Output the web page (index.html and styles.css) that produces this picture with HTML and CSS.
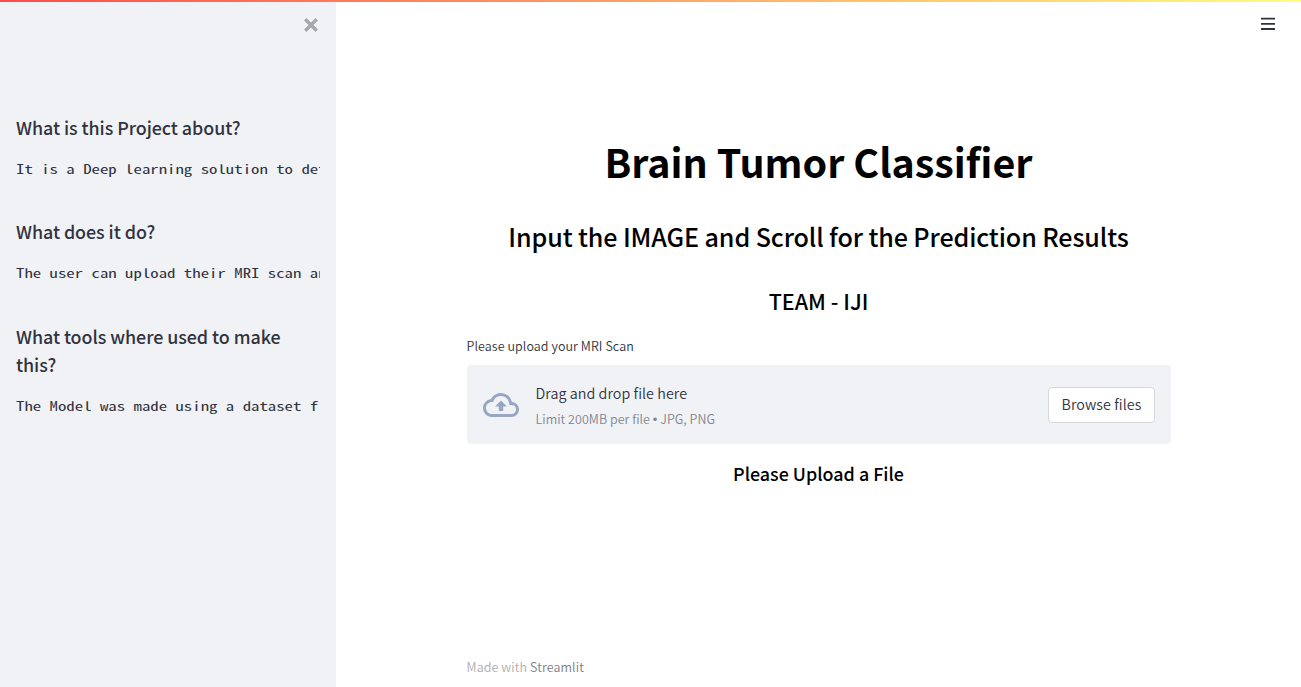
FILE: index.html
```html
<!DOCTYPE html>
<html lang="en">
<head>
<meta charset="utf-8">
<title>Brain Tumor Classifier</title>
<link rel="stylesheet" href="styles.css">
</head>
<body>
<div class="decoration"></div>
<div class="app">
  <aside class="sidebar">
    <button class="close" aria-label="Close">
      <svg width="20" height="20" viewBox="0 0 8 8"><path d="M1.4 0 0 1.4l.7.72L2.58 4 .7 5.88 0 6.57 1.4 8l.72-.72L4 5.4l1.88 1.88.69.72L8 6.57l-.72-.69L5.4 4l1.88-1.88L8 1.4 6.57 0l-.69.7L4 2.58 2.12.7z" transform="translate(1.2 1.2) scale(.7)"/></svg>
    </button>
    <section class="topic">
      <h2 class="topic-title">What is this Project about?</h2>
      <pre class="topic-text"><code>It is a Deep learning solution to det</code></pre>
    </section>
    <section class="topic">
      <h2 class="topic-title">What does it do?</h2>
      <pre class="topic-text"><code>The user can upload their MRI scan an</code></pre>
    </section>
    <section class="topic">
      <h2 class="topic-title">What tools where used to make this?</h2>
      <pre class="topic-text"><code>The Model was made using a dataset f</code></pre>
    </section>
  </aside>
  <main class="main">
    <header class="toolbar">
      <svg width="16" height="16" viewBox="0 0 16 16"><path d="M1 1.7h14v1.8H1zM1 7h14v1.8H1zM1 12.1h14v1.8H1z"/></svg>
    </header>
    <div class="content">
      <h1 class="title"><span>Brain Tumor Classifier</span></h1>
      <h2 class="subtitle"><span>Input the IMAGE and Scroll for the Prediction Results</span></h2>
      <h3 class="team"><span>TEAM - IJI</span></h3>
      <label class="label"><span>Please upload your MRI Scan</span></label>
      <div class="dropzone">
        <svg class="cloud" width="36" height="36" viewBox="0 0 24 24"><path d="M19.35 10.04A7.49 7.49 0 0 0 12 4C9.11 4 6.6 5.64 5.35 8.04A5.994 5.994 0 0 0 0 14c0 3.31 2.69 6 6 6h13c2.76 0 5-2.24 5-5 0-2.64-2.05-4.78-4.65-4.96zM19 18H6c-2.21 0-4-1.79-4-4 0-2.05 1.53-3.76 3.56-3.97l1.07-.11.5-.95A5.469 5.469 0 0 1 12 6c2.62 0 4.88 1.86 5.39 4.43l.3 1.5 1.53.11A2.98 2.98 0 0 1 22 15c0 1.65-1.35 3-3 3zM8 13h2.55v3h2.9v-3H16l-4-4z"/></svg>
        <div class="instructions">
          <span class="drag">Drag and drop file here</span>
          <span class="limit">Limit 200MB per file <span class="bullet">•</span> JPG, PNG</span>
        </div>
        <button class="browse">Browse files</button>
      </div>
      <h4 class="notice"><span>Please Upload a File</span></h4>
    </div>
    <footer class="footer"><span>Made with <a class="brand">Streamlit</a></span></footer>
  </main>
</div>
</body>
</html>
```

FILE: styles.css
```css
* { box-sizing: border-box; margin: 0; padding: 0; }
body {
  font-family: "Noto Sans CJK SC", "Open Sans", sans-serif;
  font-weight: 350;
  color: #31333f;
  background: #fff;
  overflow: hidden;
}
h1, h2, h3, h4 { font-weight: 500; }
button { font: inherit; color: inherit; }
.decoration {
  position: absolute;
  top: 0; left: 0; right: 0;
  height: 2px;
  background: linear-gradient(90deg, #ff4b4b, #fffd80);
}
.app { display: flex; height: 687px; }
.sidebar {
  width: 336px;
  flex: none;
  background: #f0f2f6;
  padding: 15px 16px 0;
  display: flex;
  flex-direction: column;
}
.close {
  align-self: flex-end;
  width: 20px; height: 20px;
  margin-right: -1px;
  margin-bottom: 78px;
  border: 0;
  background: none;
}
.close svg { display: block; fill: #a6a8af; }
.topic { margin-bottom: 35.4px; }
.topic-title { font-size: 17.9px; line-height: 28px; margin-bottom: 17px; letter-spacing: -0.06px; }
.topic-text { height: 24px; overflow: hidden; }
.topic-text code {
  display: block;
  font-family: "Noto Sans Mono CJK SC", "Liberation Mono", monospace;
  font-size: 12.6px;
  line-height: 22px;
  font-weight: 400;
  transform: scaleX(1.333);
  transform-origin: 0 0;
}
.main { flex: 1; display: flex; flex-direction: column; }
.toolbar { display: flex; justify-content: flex-end; padding: 16px 25px 0; height: 134px; }
.toolbar svg { fill: #31333f; }
.content { width: 704px; margin: 0 auto; display: flex; flex-direction: column; color: #000; }
.title { font-size: 39.4px; font-weight: 700; line-height: 54px; text-align: center; white-space: nowrap; }
.subtitle { font-size: 25.1px; line-height: 34px; text-align: center; margin-top: 31px; white-space: nowrap; letter-spacing: -0.11px; }
.team { font-size: 21.5px; line-height: 30px; text-align: center; margin-top: 33px; }
.label { font-size: 12.5px; line-height: 20px; margin-top: 20px; color: #31333f; letter-spacing: 0.08px; }
.dropzone {
  display: flex;
  align-items: center;
  height: 79px;
  margin-top: 9px;
  padding: 0 16px;
  border-radius: 4px;
  background: #f0f2f6;
  color: #31333f;
}
.cloud { fill: #97a6c3; margin-right: 17px; }
.instructions { display: flex; flex-direction: column; flex: 1; padding-top: 1px; }
.drag { font-size: 14.3px; line-height: 25px; letter-spacing: 0.06px; }
.limit { font-size: 12.5px; line-height: 26px; color: #84868e; letter-spacing: 0.04px; position: relative; top: 1px; }
.bullet { font-family: "Liberation Sans", sans-serif; font-size: 13px; line-height: 1; }
.browse {
  width: 107px; height: 36px;
  border: 1px solid #d6d7da;
  border-radius: 4px;
  background: #fff;
  font-size: 14.3px;
  line-height: 32px;
  letter-spacing: 0.08px;
  padding: 0 0 2px 1px;
}
.notice { font-size: 17.9px; line-height: 28px; text-align: center; margin-top: 15px; }
.footer { width: 704px; margin: auto auto 10px; font-size: 12.5px; line-height: 21px; color: #adaeb3; letter-spacing: 0.1px; }
.brand { color: #7c7e86; }
```
